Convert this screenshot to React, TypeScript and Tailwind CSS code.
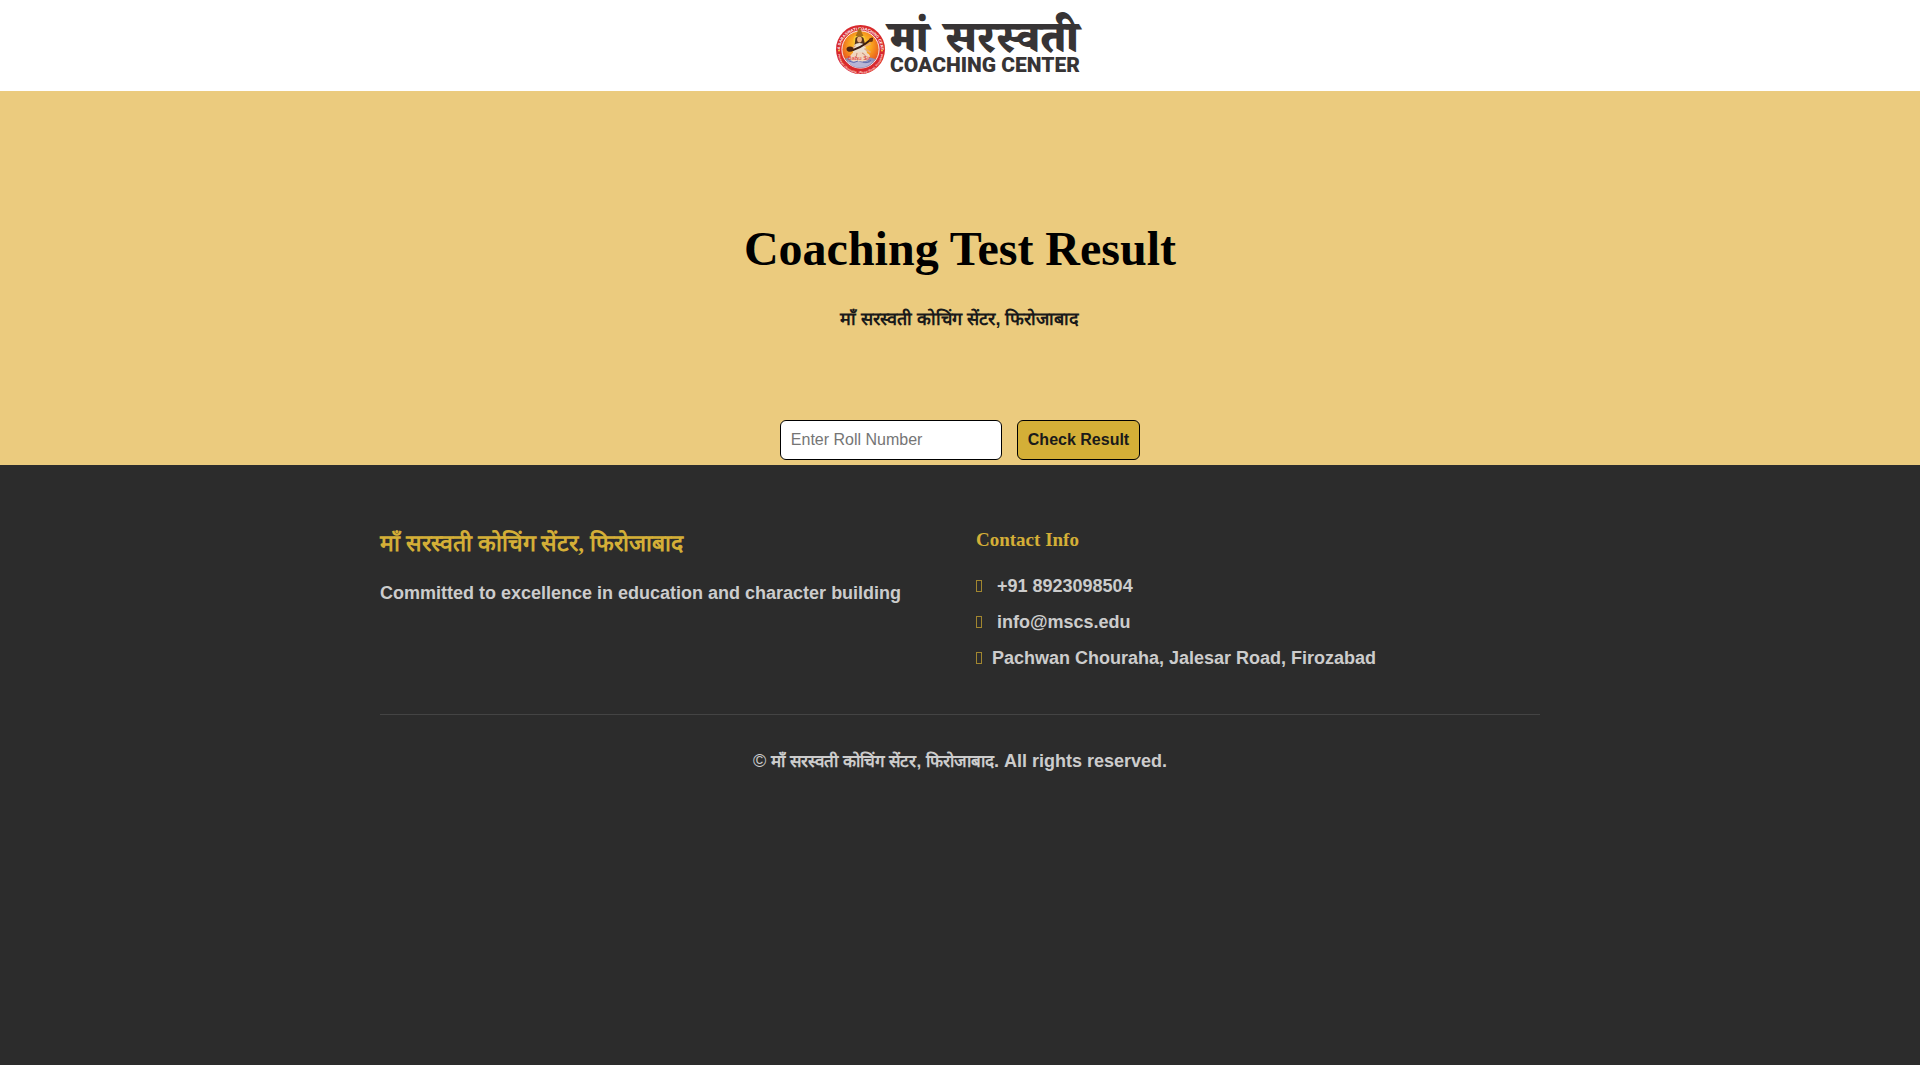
import React, { useState } from "react";

interface Contact {
  id: number;
  text: string;
  href?: string;
}

const SCHOOL = "माँ सरस्वती कोचिंग सेंटर, फिरोजाबाद";

const contacts: Contact[] = [
  { id: 1, text: "+91 8923098504", href: "tel:+918923098504" },
  { id: 2, text: "info@mscs.edu", href: "mailto:info@mscs.edu" },
  { id: 3, text: "Pachwan Chouraha, Jalesar Road, Firozabad" },
];

function Logo() {
  return (
    <svg width="250" height="60" viewBox="0 0 250 60" role="img" className="overflow-visible">
      <defs>
        <radialGradient id="glow" cx="50%" cy="38%" r="62%">
          <stop offset="0" stopColor="#ffe03c" />
          <stop offset="0.5" stopColor="#f9a01f" />
          <stop offset="1" stopColor="#e2431f" />
        </radialGradient>
        <path id="ringTop" d="M5 34.500a20.500 20.500 0 0 1 41 0" />
        <path id="ringBottom" d="M3 36a22.500 21.500 0 0 0 45 0" />
      </defs>
      <circle cx="25.5" cy="33.5" r="24.5" fill="#d8292c" />
      <circle cx="25.5" cy="33.5" r="18.6" fill="url(#glow)" stroke="#fff" strokeWidth="0.9" />
      <text fontFamily="Liberation Sans, sans-serif" fontSize="4" fontWeight="700" fill="#fff">
        <textPath href="#ringTop" startOffset="50%" textAnchor="middle">MAA SARASWATI COACHING CENTER</textPath>
      </text>
      <text fontFamily="Liberation Sans, sans-serif" fontSize="3" fontWeight="700" fill="#ffd9cf">
        <textPath href="#ringBottom" startOffset="50%" textAnchor="middle">Pachwan Chouraha, Jalesar Road, Firozabad</textPath>
      </text>
      <circle cx="4" cy="34.500" r="0.9" fill="#ffd84a" />
      <circle cx="47" cy="34.500" r="0.9" fill="#ffd84a" />
      <path d="M10 43q7-4 15-3t16 3q-6 9-15.500 9T10 43z" fill="#8c91bd" />
      <path d="M12 46q6-3 13 0t13-1q-5 6.500-12.500 6.500T12 46z" fill="#b7b6d5" />
      <circle cx="24.500" cy="24" r="6" fill="#f7cb37" />
      <path d="M20.500 20l1.500-3 1-3 1.500-2.500 1.500 2.500 1 3 1.500 3z" fill="#a86c18" />
      <path d="M20.500 22q4-4 8 0l2 8h-11z" fill="#55321c" />
      <ellipse cx="24.500" cy="23.500" rx="2.400" ry="3" fill="#efb37c" />
      <path d="M19 29q5.500-4 11 0l2 8q-7 4-14 0z" fill="#e9dfcf" />
      <path d="M14 42q4-8 11-6 9 0 10 4-2 7-10 5-8 2-11-3z" fill="#f1d5bf" />
      <path d="M20 30l-5 4M30 30l5-2M30 33l5 3" stroke="#e7a876" strokeWidth="1.600" strokeLinecap="round" />
      <path d="M14 34.500Q24 34 37 22.500" fill="none" stroke="#3a1c10" strokeWidth="2" strokeLinecap="round" />
      <ellipse cx="15" cy="33" rx="3.500" ry="2.600" fill="#4c2412" />
      <circle cx="36" cy="24" r="2" fill="#69320f" />
      <path d="M27 37q5 2 3 7M22 37q-2 4 1 7" fill="none" stroke="#b9785d" strokeWidth="0.800" />
      <path d="M14 45q5 3 9 0M28 46q5 2 8-2" fill="none" stroke="#5e6cae" strokeWidth="1" />
      <text x="24" y="44" textAnchor="middle" fontFamily="Liberation Sans, sans-serif" fontSize="6" fill="#e23a3a">Babu Sir</text>
      <g fill="#373435">
        <g fontFamily="Noto Serif Devanagari, serif" fontSize="44" fontWeight="900">
          <text x="54" y="36">मां</text>
          <text x="110" y="36">सरस्वती</text>
        </g>
        <text x="55" y="55.500" fontFamily="Roboto, sans-serif" fontSize="21" fontWeight="900">COACHING CENTER</text>
      </g>
    </svg>
  );
}

export default function App() {
  const [roll, setRoll] = useState<string>("");

  const onCheck = (e: React.FormEvent<HTMLFormElement>) => {
    e.preventDefault();
  };

  return (
    <div className="min-h-screen bg-white font-['Liberation_Sans',sans-serif]">
      <header className="flex justify-center pt-4 pb-[15px]">
        <a href="#" className="block">
          <Logo />
        </a>
      </header>

      <main className="bg-[#ebcb7e] text-center pb-[5px]">
        <div className="pt-[129px] pb-[85px]">
          <h1 className="text-5xl leading-[58px] font-bold text-black font-['Liberation_Serif',serif]">
            Coaching Test Result
          </h1>
          <p className="mt-[25px] text-lg leading-8 font-bold text-[#1a1a1a]">{SCHOOL}</p>
        </div>
        <form onSubmit={onCheck} className="flex justify-center gap-[15px]">
          <input
            type="text"
            aria-label="Enter Roll Number"
            placeholder="Enter Roll Number"
            value={roll}
            onChange={(e) => setRoll(e.target.value)}
            className="w-[222px] h-10 px-2.5 text-base bg-white border border-black rounded-md placeholder:text-[#757575]"
          />
          <button
            type="submit"
            className="h-10 px-2.5 text-base font-bold text-[#1a1a1a] bg-[#d4af37] border border-black rounded-md"
          >
            Check Result
          </button>
        </form>
      </main>

      <footer className="bg-[#2c2c2c] text-[#cccccc] text-lg font-bold min-h-[600px] pt-[63px] px-5">
        <div className="max-w-[1160px] mx-auto">
          <div className="grid grid-cols-2 gap-8 pb-[42px]">
            <div>
              <h3 className="text-[23px] leading-8 text-[#d4af37] font-['Liberation_Serif',serif]">{SCHOOL}</h3>
              <p className="mt-[19px]">Committed to excellence in education and character building</p>
            </div>
            <div>
              <h4 className="text-[19px] leading-6 text-[#d4af37] font-['Liberation_Serif',serif]">Contact Info</h4>
              <ul className="mt-5 flex flex-col gap-2">
                {contacts.map((c) => (
                  <li key={c.id} className="flex items-center">
                    <i className="w-[6px] h-3 mr-2.5 border border-[#a1862f]" />
                    {c.href ? <a href={c.href} className="ml-[5px]">{c.text}</a> : <span>{c.text}</span>}
                  </li>
                ))}
              </ul>
            </div>
          </div>
          <div className="border-t border-[#444444] pt-8 text-center">
            <p>
              <span className="font-normal">©</span> <span className="text-[17px]">{SCHOOL}</span>. All rights reserved.
            </p>
          </div>
        </div>
      </footer>
    </div>
  );
}
